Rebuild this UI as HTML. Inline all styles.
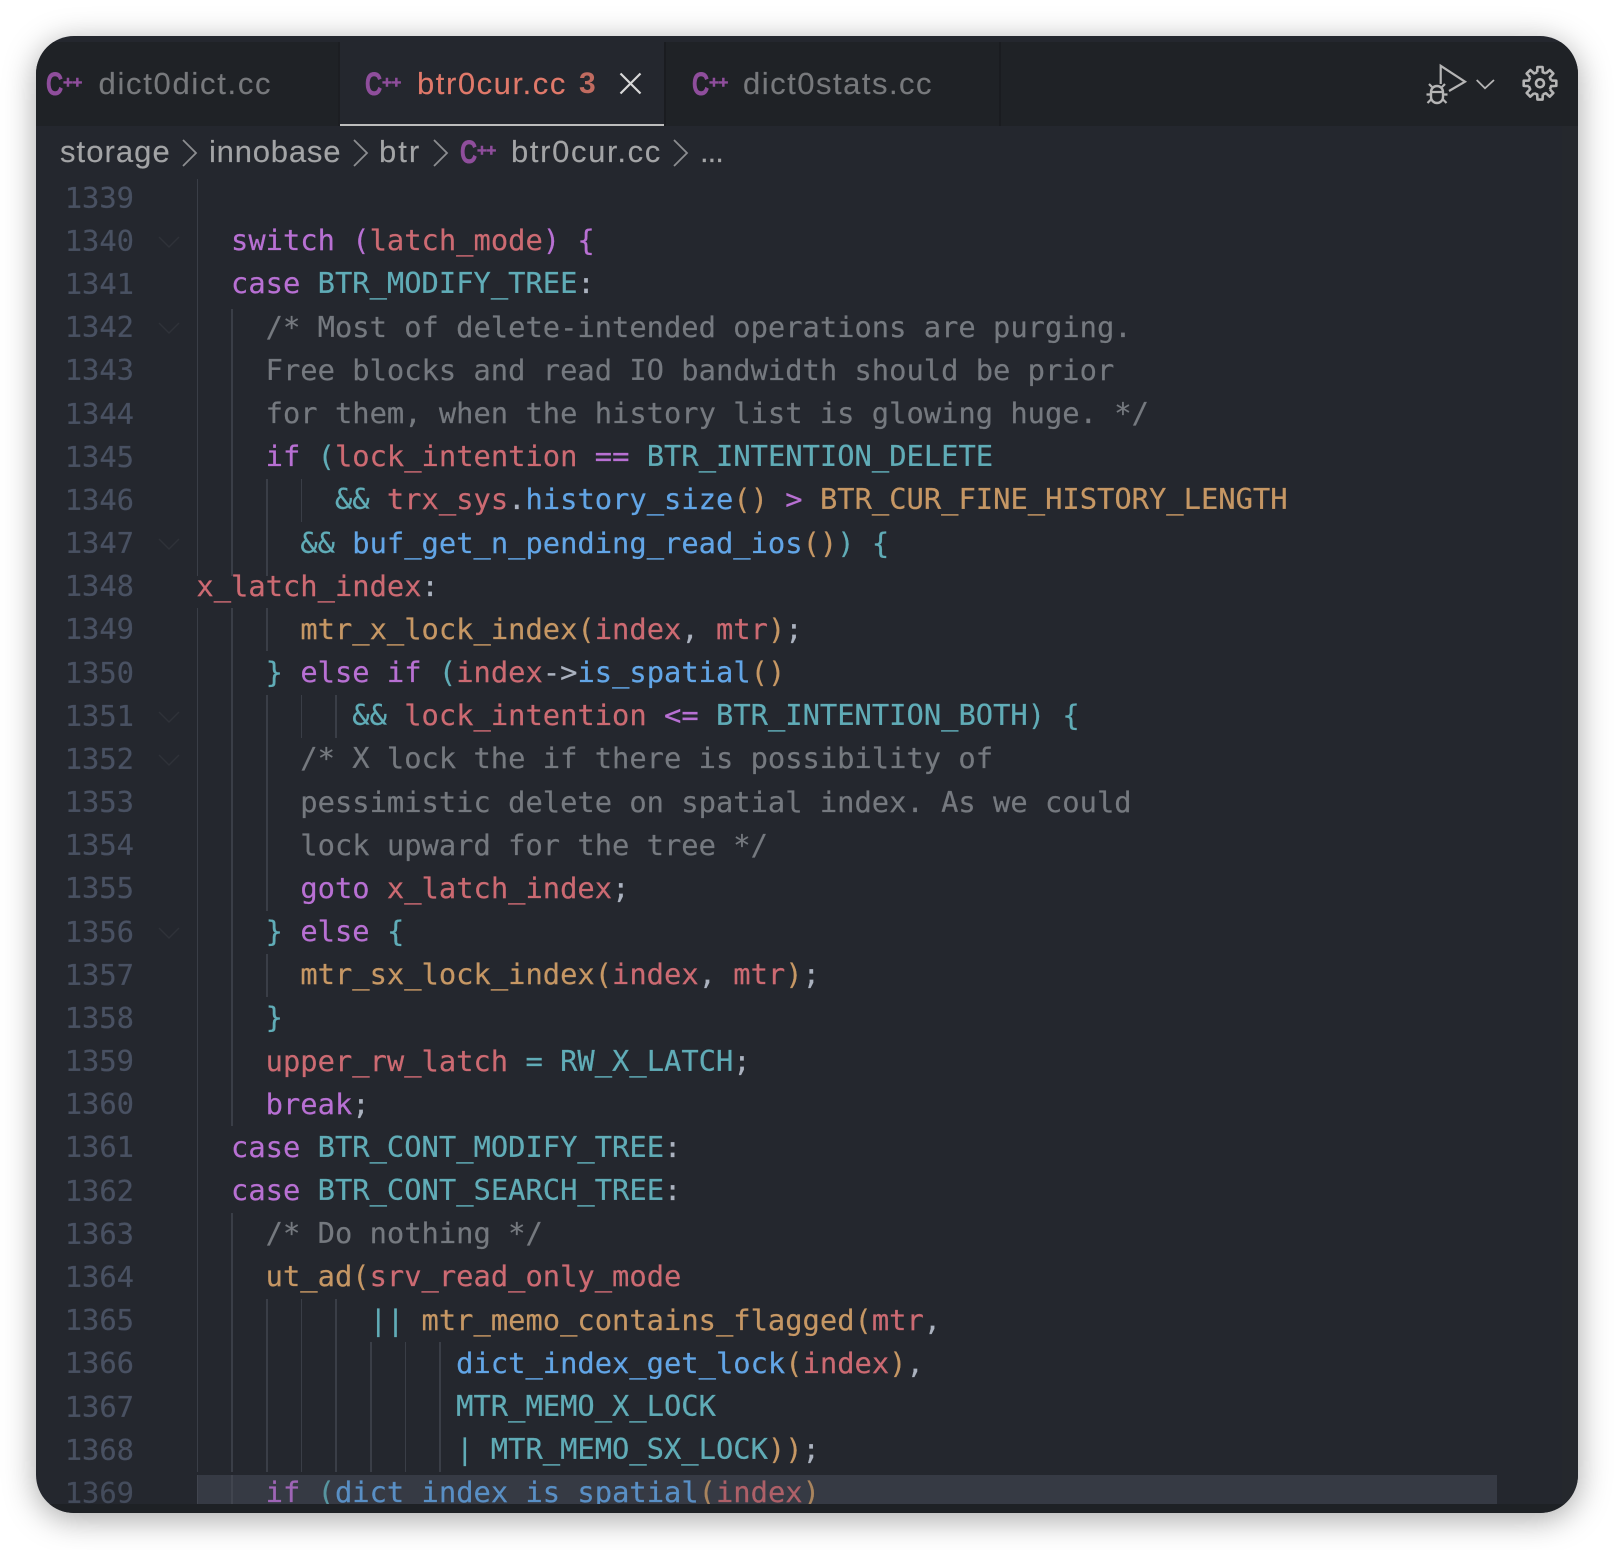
<!DOCTYPE html>
<html><head><meta charset="utf-8">
<style>
html,body{margin:0;padding:0;background:#fff;width:1614px;height:1550px;overflow:hidden}
#w{position:absolute;left:36px;top:36px;width:1542px;height:1477px;background:#24272e}
#sh{position:absolute;left:36px;top:36px;width:1542px;height:1477px;border-radius:38px;box-shadow:0 6px 32px rgba(0,0,0,.35)}
.a{position:absolute;white-space:pre}
#p{position:absolute;left:0;top:0;width:1614px;height:1550px;clip-path:inset(36px 36px 37px 36px round 38px)}
.ui{font-family:"Liberation Sans",sans-serif;font-size:31px;line-height:40px;letter-spacing:1.35px;-webkit-text-stroke:.15px currentColor}
.cpp{width:40px;height:40px;color:#8f4e9c;font-family:"Liberation Sans",sans-serif;font-weight:700}
.cpp b{position:absolute;left:-1px;top:0;font-size:32px;line-height:40px;transform:scaleX(.74);transform-origin:0 50%;-webkit-text-stroke:.6px currentColor}
.cpp i{position:absolute;left:16px;top:-1px;font-style:normal;font-size:17px;line-height:40px;letter-spacing:-.6px;-webkit-text-stroke:.6px currentColor}
#code{position:absolute;left:0;top:0;width:1614px;height:1504px;overflow:hidden;font-family:"DejaVu Sans Mono",monospace;font-size:28.78px;color:#abb2bf}
#t{position:absolute;left:0;top:.8px;width:1614px;height:1504px;-webkit-text-stroke:.2px currentColor}
.l{position:absolute;left:196.4px;height:43.17px;line-height:43.17px;white-space:pre;margin-top:-.7px}
.n{position:absolute;left:64.7px;height:43.17px;line-height:43.17px;color:#495162}
.gd{position:absolute;width:1.7px;background:#3a3e47}
.k{color:#b870d3}.r{color:#cc6a72}.b{color:#62a5e6}.c{color:#60acb7}.o{color:#c69764}.g{color:#75797f}.d{color:#abb2bf}
</style></head><body>
<div id="sh"></div>
<div id="p">
<div id="w"></div>
<div class="a" style="left:36px;top:42px;width:1542px;height:84px;background:#1f2226"></div>
<div class="a" style="left:340px;top:42px;width:324px;height:82px;background:#24272e"></div>
<div class="a" style="left:340px;top:124px;width:324px;height:2px;background:#bdbdbd"></div>
<div class="a" style="left:664px;top:42px;width:2px;height:84px;background:#1a1c20"></div>
<div class="a" style="left:338px;top:42px;width:2px;height:84px;background:#1c1e22"></div>
<div class="a" style="left:999px;top:42px;width:2px;height:84px;background:#1a1c20"></div>
<div class="a" style="left:1562px;top:126px;width:16px;height:1378px;background:#25282d"></div>

<div class="a cpp" style="left:47px;top:64px"><b>C</b><i>++</i></div>
<div class="a ui" style="left:98.5px;top:64px;color:#77797c;letter-spacing:1.7px">dict0dict.cc</div>
<div class="a cpp" style="left:366px;top:64px"><b>C</b><i>++</i></div>
<div class="a ui" style="left:417px;top:64px;color:#e0796a;letter-spacing:1.55px">btr0cur.cc</div>
<div class="a ui" style="left:579px;top:64px;color:#c06b60;font-weight:700;font-size:30px;letter-spacing:0;-webkit-text-stroke:0">3</div>
<svg class="a" style="left:615px;top:68px" width="32" height="32" viewBox="0 0 32 32"><path d="M5.5 5.5L25.5 25.5M25.5 5.5L5.5 25.5" stroke="#d8d8d8" stroke-width="2.2" fill="none"/></svg>
<div class="a cpp" style="left:693px;top:64px"><b>C</b><i>++</i></div>
<div class="a ui" style="left:743px;top:64px;color:#77797c;letter-spacing:1.5px">dict0stats.cc</div>

<svg class="a" style="left:1420px;top:60px" width="150" height="50" viewBox="1420 60 150 50" fill="none" stroke="#b5b5b5">
<path d="M1440.7 84V65.8L1465 81.7L1449 91" stroke-width="2.2"/>
<path d="M1431 92a6 6 0 0 1 12 0v5a6 6 0 0 1-12 0z" stroke-width="2.4"/>
<path d="M1432 87l-3-3M1442 87l3-3M1431 92h12M1431 94.5h-4.5M1443 94.5h4.5M1431 99.5l-3.5 3.5M1443 99.5l3.5 3.5" stroke-width="2.2"/>
<path d="M1476.7 80L1485 88.3L1494 80" stroke-width="1.8"/>
<g transform="translate(1540 83.3)" stroke-width="2.6" stroke-linejoin="round">
<circle r="4"/>
<path d="M11.16-2.78L16.3-2.58L16.3 2.58L11.16 2.78L9.86 5.92"/>
<path transform="rotate(45)" d="M11.16-2.78L16.3-2.58L16.3 2.58L11.16 2.78L9.86 5.92"/>
<path transform="rotate(90)" d="M11.16-2.78L16.3-2.58L16.3 2.58L11.16 2.78L9.86 5.92"/>
<path transform="rotate(135)" d="M11.16-2.78L16.3-2.58L16.3 2.58L11.16 2.78L9.86 5.92"/>
<path transform="rotate(180)" d="M11.16-2.78L16.3-2.58L16.3 2.58L11.16 2.78L9.86 5.92"/>
<path transform="rotate(225)" d="M11.16-2.78L16.3-2.58L16.3 2.58L11.16 2.78L9.86 5.92"/>
<path transform="rotate(270)" d="M11.16-2.78L16.3-2.58L16.3 2.58L11.16 2.78L9.86 5.92"/>
<path transform="rotate(315)" d="M11.16-2.78L16.3-2.58L16.3 2.58L11.16 2.78L9.86 5.92"/>
</g>
</svg>

<div class="a ui" style="left:60px;top:132px;color:#a3a4a6;letter-spacing:1.05px">storage</div>
<div class="a ui" style="left:209px;top:132px;color:#a3a4a6;letter-spacing:.8px">innobase</div>
<div class="a ui" style="left:379px;top:132px;color:#a3a4a6;letter-spacing:2px">btr</div>
<div class="a cpp" style="left:461px;top:132px"><b>C</b><i>++</i></div>
<div class="a ui" style="left:511px;top:132px;color:#a3a4a6;letter-spacing:1.65px">btr0cur.cc</div>
<div class="a ui" style="left:700px;top:132px;color:#a3a4a6;letter-spacing:-1px">...</div>
<svg class="a" style="left:0;top:130px" width="720" height="44" viewBox="0 130 720 44" fill="none" stroke="#8c8d90" stroke-width="1.8">
<path d="M183 140L196 153L183 166M354 140L367 153L354 166M434 140L447 153L434 166M674 140L687 153L674 166"/>
</svg>

<div class="a" style="left:197px;top:1475px;width:1300px;height:29px;background:#363a44"></div>

<div id="code">
<div class="gd" style="left:196.7px;top:179px;height:397px"></div>
<div class="gd" style="left:196.7px;top:608px;height:864px"></div>
<div class="gd" style="left:196.7px;top:1475px;height:29px;background:#41454f"></div>
<div class="gd" style="left:231.4px;top:309px;height:267px"></div>
<div class="gd" style="left:231.4px;top:608px;height:518px"></div>
<div class="gd" style="left:231.4px;top:1213px;height:259px"></div>
<div class="gd" style="left:231.4px;top:1475px;height:29px;background:#41454f"></div>
<div class="gd" style="left:266px;top:479px;height:97px"></div>
<div class="gd" style="left:266px;top:608px;height:43px"></div>
<div class="gd" style="left:266px;top:695px;height:216px"></div>
<div class="gd" style="left:266px;top:954px;height:43px"></div>
<div class="gd" style="left:266px;top:1299px;height:173px"></div>
<div class="gd" style="left:300.7px;top:479px;height:43px"></div>
<div class="gd" style="left:300.7px;top:695px;height:43px"></div>
<div class="gd" style="left:300.7px;top:1299px;height:173px"></div>
<div class="gd" style="left:335.4px;top:695px;height:43px"></div>
<div class="gd" style="left:335.4px;top:1299px;height:173px"></div>
<div class="gd" style="left:370px;top:1342px;height:130px"></div>
<div class="gd" style="left:404.7px;top:1342px;height:130px"></div>
<div class="gd" style="left:439.4px;top:1342px;height:130px"></div>

<div id="t">
<div class="n" style="top:176px">1339</div>
<div class="n" style="top:219.2px">1340</div>
<div class="n" style="top:262.3px">1341</div>
<div class="n" style="top:305.5px">1342</div>
<div class="n" style="top:348.7px">1343</div>
<div class="n" style="top:391.9px">1344</div>
<div class="n" style="top:435px">1345</div>
<div class="n" style="top:478.2px">1346</div>
<div class="n" style="top:521.4px">1347</div>
<div class="n" style="top:564.5px">1348</div>
<div class="n" style="top:607.7px">1349</div>
<div class="n" style="top:650.9px">1350</div>
<div class="n" style="top:694px">1351</div>
<div class="n" style="top:737.2px">1352</div>
<div class="n" style="top:780.4px">1353</div>
<div class="n" style="top:823.6px">1354</div>
<div class="n" style="top:866.7px">1355</div>
<div class="n" style="top:909.9px">1356</div>
<div class="n" style="top:953.1px">1357</div>
<div class="n" style="top:996.2px">1358</div>
<div class="n" style="top:1039.4px">1359</div>
<div class="n" style="top:1082.6px">1360</div>
<div class="n" style="top:1125.7px">1361</div>
<div class="n" style="top:1168.9px">1362</div>
<div class="n" style="top:1212.1px">1363</div>
<div class="n" style="top:1255.3px">1364</div>
<div class="n" style="top:1298.4px">1365</div>
<div class="n" style="top:1341.6px">1366</div>
<div class="n" style="top:1384.8px">1367</div>
<div class="n" style="top:1427.9px">1368</div>
<div class="n" style="top:1471.1px;opacity:.9">1369</div>

<svg class="a" style="left:155px;top:170px" width="30" height="1000" viewBox="155 170 30 1000" fill="none" stroke="#2f3239" stroke-width="1.4">
<path d="M159 236l10 10l10-10M159 322l10 10l10-10M159 538l10 10l10-10M159 711l10 10l10-10M159 754l10 10l10-10M159 927l10 10l10-10"/>
</svg>

<div class="l" style="top:219.2px">  <span class="k">switch (</span><span class="r">latch_mode</span><span class="k">) {</span></div>
<div class="l" style="top:262.3px">  <span class="k">case</span> <span class="c">BTR_MODIFY_TREE</span>:</div>
<div class="l g" style="top:305.5px">    /* Most of delete-intended operations are purging.</div>
<div class="l g" style="top:348.7px">    Free blocks and read IO bandwidth should be prior</div>
<div class="l g" style="top:391.9px">    for them, when the history list is glowing huge. */</div>
<div class="l" style="top:435px">    <span class="k">if</span> <span class="c">(</span><span class="r">lock_intention</span> <span class="k">==</span> <span class="c">BTR_INTENTION_DELETE</span></div>
<div class="l" style="top:478.2px">        <span class="c">&amp;&amp;</span> <span class="r">trx_sys</span>.<span class="b">history_size</span><span class="o">()</span> <span class="k">&gt;</span> <span class="o">BTR_CUR_FINE_HISTORY_LENGTH</span></div>
<div class="l" style="top:521.4px">      <span class="c">&amp;&amp;</span> <span class="b">buf_get_n_pending_read_ios</span><span class="o">()</span><span class="c">) {</span></div>
<div class="l" style="top:564.5px"><span class="r">x_latch_index</span>:</div>
<div class="l" style="top:607.7px">      <span class="o">mtr_x_lock_index(</span><span class="r">index</span>, <span class="r">mtr</span><span class="o">)</span>;</div>
<div class="l" style="top:650.9px">    <span class="c">}</span> <span class="k">else if</span> <span class="c">(</span><span class="r">index</span>-&gt;<span class="b">is_spatial</span><span class="o">()</span></div>
<div class="l" style="top:694px">         <span class="c">&amp;&amp;</span> <span class="r">lock_intention</span> <span class="k">&lt;=</span> <span class="c">BTR_INTENTION_BOTH) {</span></div>
<div class="l g" style="top:737.2px">      /* X lock the if there is possibility of</div>
<div class="l g" style="top:780.4px">      pessimistic delete on spatial index. As we could</div>
<div class="l g" style="top:823.6px">      lock upward for the tree */</div>
<div class="l" style="top:866.7px">      <span class="k">goto</span> <span class="r">x_latch_index</span>;</div>
<div class="l" style="top:909.9px">    <span class="c">}</span> <span class="k">else</span> <span class="c">{</span></div>
<div class="l" style="top:953.1px">      <span class="o">mtr_sx_lock_index(</span><span class="r">index</span>, <span class="r">mtr</span><span class="o">)</span>;</div>
<div class="l" style="top:996.2px">    <span class="c">}</span></div>
<div class="l" style="top:1039.4px">    <span class="r">upper_rw_latch</span> <span class="c">= RW_X_LATCH</span>;</div>
<div class="l" style="top:1082.6px">    <span class="k">break</span>;</div>
<div class="l" style="top:1125.7px">  <span class="k">case</span> <span class="c">BTR_CONT_MODIFY_TREE</span>:</div>
<div class="l" style="top:1168.9px">  <span class="k">case</span> <span class="c">BTR_CONT_SEARCH_TREE</span>:</div>
<div class="l g" style="top:1212.1px">    /* Do nothing */</div>
<div class="l" style="top:1255.3px">    <span class="o">ut_ad(</span><span class="r">srv_read_only_mode</span></div>
<div class="l" style="top:1298.4px">          <span class="c">||</span> <span class="o">mtr_memo_contains_flagged(</span><span class="r">mtr</span>,</div>
<div class="l" style="top:1341.6px">               <span class="b">dict_index_get_lock</span><span class="o">(</span><span class="r">index</span><span class="o">)</span>,</div>
<div class="l" style="top:1384.8px">               <span class="c">MTR_MEMO_X_LOCK</span></div>
<div class="l" style="top:1427.9px">               <span class="c">| MTR_MEMO_SX_LOCK</span><span class="o">))</span>;</div>
<div class="l" style="top:1471.1px;opacity:.8">    <span class="k">if</span> <span class="c">(</span><span class="b">dict_index_is_spatial</span><span class="o">(</span><span class="r">index</span><span class="o">)</span></div>
</div>
</div>

<div class="a" style="left:36px;top:1504px;width:1542px;height:9px;background:#1e2125"></div>
</div>
</body></html>
